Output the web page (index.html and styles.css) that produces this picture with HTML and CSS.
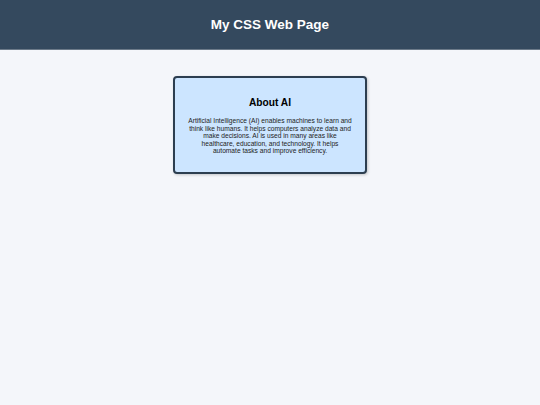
FILE: index.html
```html
<!DOCTYPE html>
<html>
<head>
<meta charset="utf-8">
<link rel="stylesheet" href="styles.css">
</head>
<body>
<header class="site-header">
  <h1 class="site-title">My CSS Web Page</h1>
</header>
<main class="content">
  <section class="card">
    <h2 class="card-title">About AI</h2>
    <p class="card-text">Artificial Intelligence (AI) enables machines to learn and<br>think like humans. It helps computers analyze data and<br>make decisions. AI is used in many areas like<br>healthcare, education, and technology. It helps<br>automate tasks and improve efficiency.</p>
  </section>
</main>
</body>
</html>
```
FILE: styles.css
```css
html, body {
  margin: 0;
  padding: 0;
}
body {
  background: #f4f6fa;
  font-family: "Liberation Sans", Arial, sans-serif;
  width: 540px;
  height: 405px;
}
.site-header {
  background: #34495e;
  height: 50px;
  display: flex;
  align-items: center;
  justify-content: center;
  border-bottom: 1px solid #6c7a89;
  box-sizing: border-box;
}
.site-title {
  margin: 0;
  color: #ffffff;
  font-size: 13.5px;
  font-weight: bold;
}
.content {
  display: flex;
  justify-content: center;
  padding-top: 26px;
}
.card {
  box-sizing: border-box;
  width: 194px;
  height: 98px;
  background: #cce5ff;
  border: 2px solid #2c3e50;
  border-radius: 4px;
  box-shadow: 1px 1px 3px rgba(0,0,0,0.2);
  padding: 19px 8px 0;
  text-align: center;
}
.card-title {
  margin: 0 0 9px;
  font-size: 10.2px;
  font-weight: bold;
  color: #000;
}
.card-text {
  margin: 0;
  font-size: 6.65px;
  line-height: 7.6px;
  color: #222;
}
```
